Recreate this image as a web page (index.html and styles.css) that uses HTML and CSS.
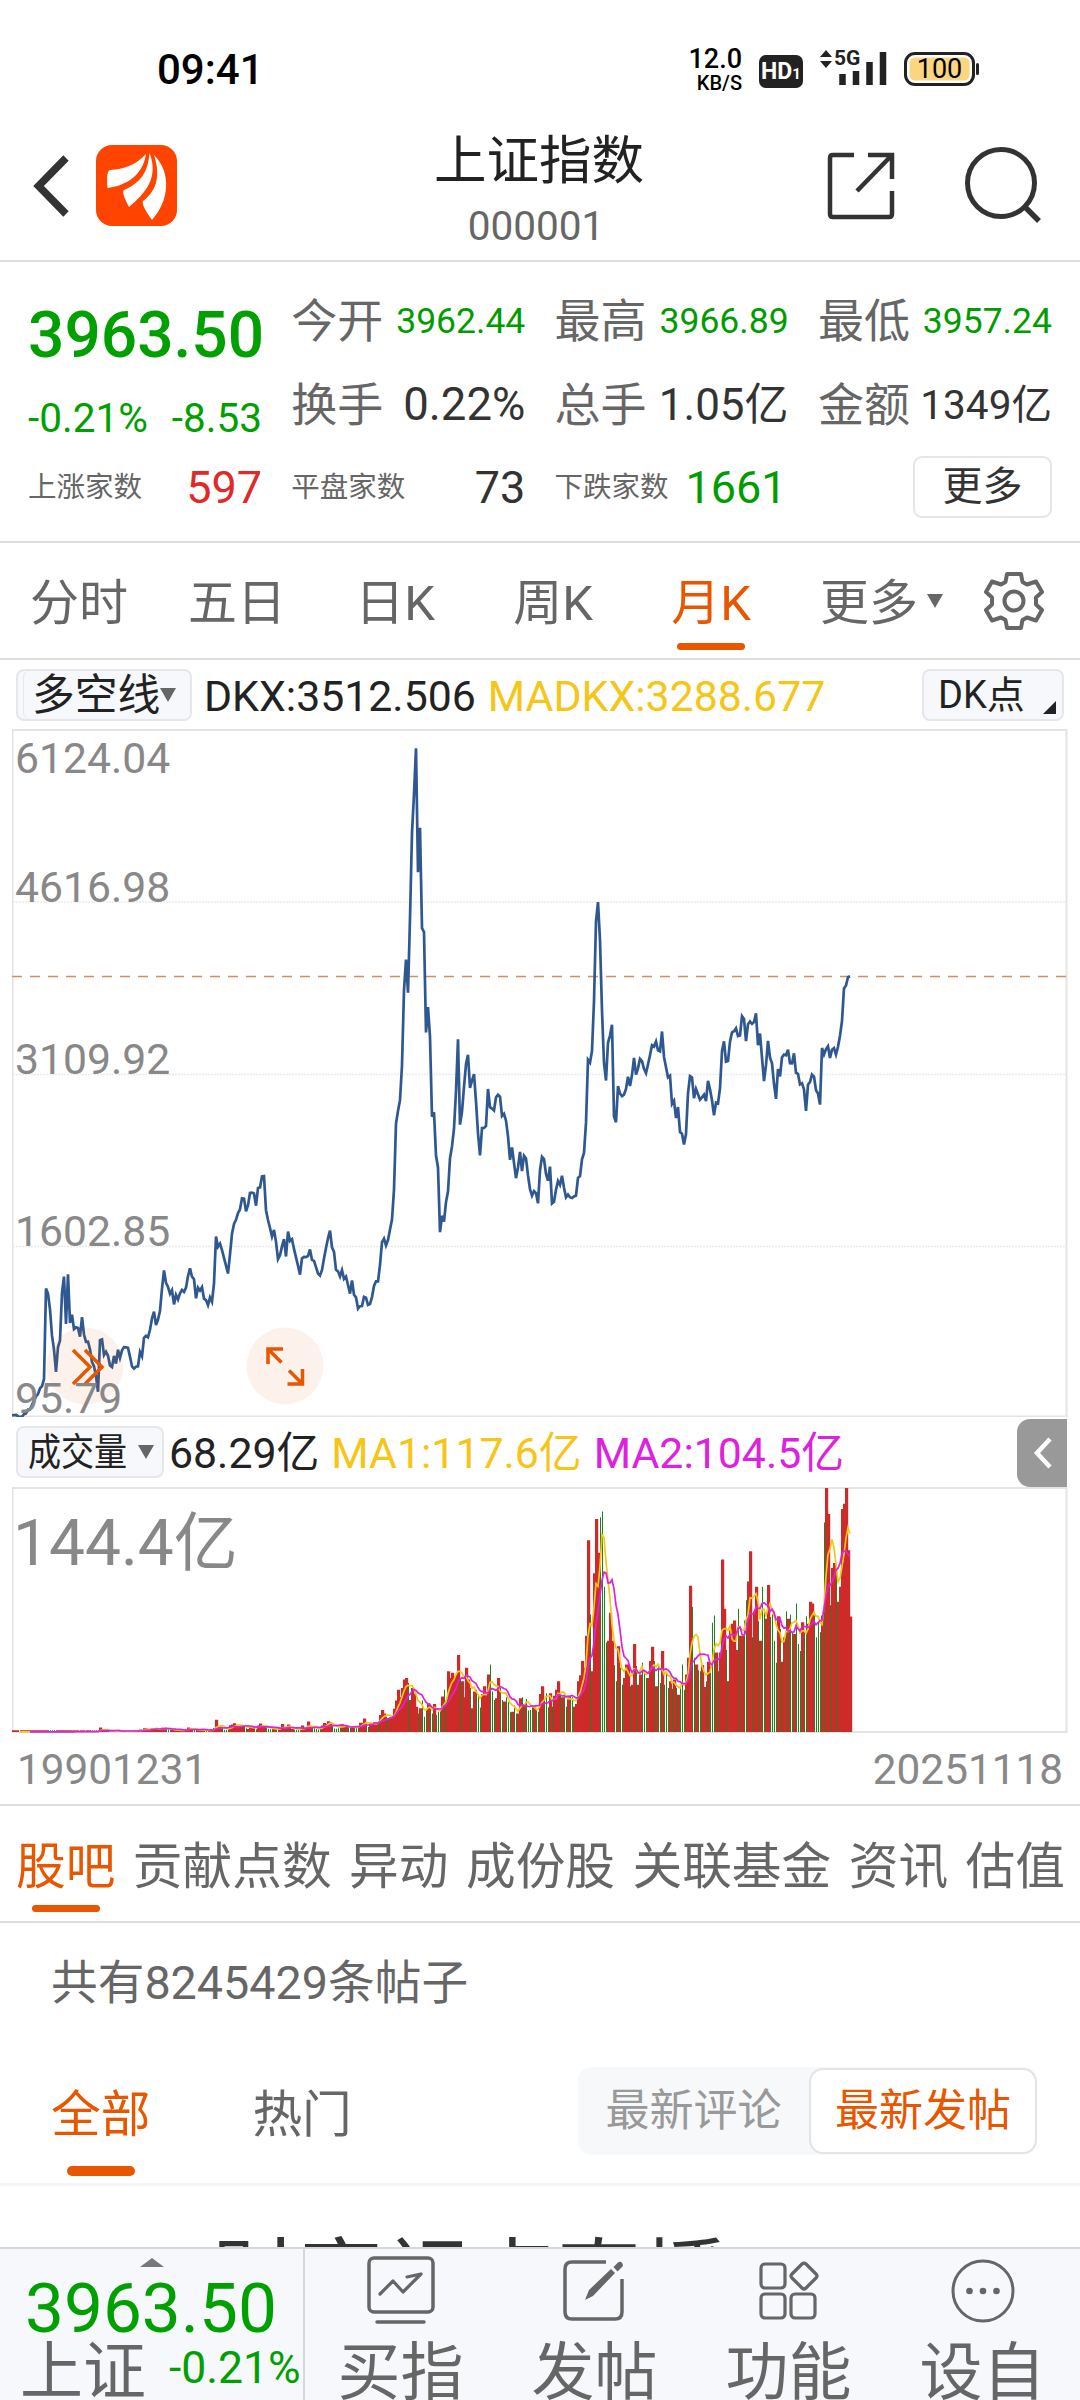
FILE: index.html
```html
<!DOCTYPE html>
<html lang="zh-CN">

<head>
    <meta charset="UTF-8">
    <meta name="viewport" content="width=device-width, initial-scale=1.0">
    <title>上证指数</title>
    <link rel="stylesheet" href="styles.css">
</head>

<body>
    <div class="status-bar">
        <span class="time">09:41</span>
        <div class="speed">
            <span class="speed-value">12.0</span>
            <span class="speed-unit">KB/S</span>
        </div>
        <span class="hd">HD<small>1</small></span>
        <svg class="signal" width="68" height="40" viewBox="0 0 68 40">
            <path d="M0 8l6-7 6 7zM0 12h12l-6 7z" fill="#222" />
            <text x="14" y="16" class="signal-text">5G</text>
            <path d="M22.500 36v-11M36 36v-14M49.500 36v-23M63 36v-33" stroke="#222" stroke-width="6.500" stroke-linecap="butt" />
        </svg>
        <div class="battery">100</div>
    </div>

    <header class="header">
        <svg class="back" width="36" height="62" viewBox="0 0 36 62">
            <path d="M33 3L5.500 31L33 59" fill="none" stroke="#333" stroke-width="7.500" />
        </svg>
        <svg class="logo" width="81" height="81" viewBox="0 0 81 81">
            <rect width="81" height="81" rx="16" fill="#ff4400" />
            <path d="M50 9C40 20 28 24 14 25Q10 26 11.500 43C34 40 47 28 50 9z" fill="#fff" />
            <path d="M53.500 8C52 28 44 38 28 45Q25 47 33 62C50 48 63 32 53.500 8z" fill="#fff" />
            <path d="M58 10C66 34 58 48 47 56Q45 60 56 75C73 56 76 28 58 10z" fill="#fff" />
        </svg>
        <div class="title">
            <h1>上证指数</h1>
            <p>000001</p>
        </div>
        <svg class="share" width="68" height="68" viewBox="0 0 68 68">
            <path d="M27 3H6Q3 3 3 6v56q0 3 3 3h56q3 0 3-3V39M41 3h24v24M64 4L30 39" fill="none" stroke="#333" stroke-width="4.500" />
        </svg>
        <svg class="search" width="78" height="78" viewBox="0 0 78 78">
            <circle cx="37" cy="37" r="33.500" fill="none" stroke="#333" stroke-width="5" />
            <path d="M61 61l14 14" stroke="#333" stroke-width="5.500" />
        </svg>
    </header>

    <section class="quote">
        <div class="cell price">3963.50</div>
        <div class="cell"><label>今开</label><b class="green s35">3962.44</b></div>
        <div class="cell"><label>最高</label><b class="green s35">3966.89</b></div>
        <div class="cell"><label>最低</label><b class="green s35">3957.24</b></div>
        <div class="cell change"><span>-0.21%</span><span>-8.53</span></div>
        <div class="cell"><label>换手</label><b class="s45">0.22%</b></div>
        <div class="cell"><label>总手</label><b class="s43">1.05亿</b></div>
        <div class="cell"><label>金额</label><b class="s40">1349亿</b></div>
        <div class="cell small"><label>上涨家数</label><b class="red s44">597</b></div>
        <div class="cell small"><label>平盘家数</label><b class="s44">73</b></div>
        <div class="cell small"><label>下跌家数</label><b class="green s44 falling">1661</b></div>
        <div class="cell"><button class="more">更多</button></div>
    </section>

    <nav class="periods">
        <span>分时</span>
        <span>五日</span>
        <span>日K</span>
        <span>周K</span>
        <span class="active">月K</span>
        <span>更多<i class="arrow"></i></span>
        <svg width="62" height="62" viewBox="-31 -31 62 62">
            <path d="M-7-27H7L8.500-19L13-16.500L22-19.500L28-9L22-3.500V3.500L28 9L22 19.500L13 16.500L8.500 19L7 27H-7L-8.500 19L-13 16.500L-22 19.500L-28 9L-22 3.500V-3.500L-28-9L-22-19.500L-13-16.500L-8.500-19z" fill="none" stroke="#666" stroke-width="4" stroke-linejoin="round" />
            <circle r="9.500" fill="none" stroke="#666" stroke-width="4" />
        </svg>
    </nav>

    <div class="indicator">
        <div class="select dkx">多空线<i class="arrow"></i></div>
        <span class="value">DKX:3512.506</span>
        <span class="value yellow">MADKX:3288.677</span>
        <div class="select dk">DK点<i class="corner"></i></div>
    </div>

    <svg class="price-chart" width="1056" height="688" viewBox="12 729 1056 688">
        <path class="grid" d="M13 902H1067M13 1074.500H1067M13 1246.500H1067" />
        <rect class="frame" x="12.500" y="730" width="1054" height="686.500" />
        <path class="current" d="M12 976.500H1067" />
        <path class="line" id="priceLine" />
        <circle class="round" cx="85" cy="1366" r="38.500" />
        <circle class="round" cx="285" cy="1366" r="38.500" />
        <path class="tool" d="M73 1350l17 17-17 17M85 1350l17 17-17 17" />
        <path class="tool" d="M268 1364v-15h15M268.500 1349.500l13 13M302.500 1369v15h-15M302 1383.500l-13-13" />
        <text class="scale" x="15" y="773">6124.04</text>
        <text class="scale" x="15" y="902">4616.98</text>
        <text class="scale" x="15" y="1073.500">3109.92</text>
        <text class="scale" x="15" y="1245.500">1602.85</text>
        <text class="scale" x="15" y="1413">95.79</text>
    </svg>

    <div class="indicator volume">
        <div class="select vol"><span>成交量</span><i class="arrow"></i></div>
        <span class="value">68.29亿</span>
        <span class="value yellow">MA1:117.6亿</span>
        <span class="value pink">MA2:104.5亿</span>
        <div class="handle">
            <svg width="20" height="34" viewBox="0 0 20 34">
                <path d="M18 3L5 17l13 14" fill="none" stroke="#fff" stroke-width="4.500" />
            </svg>
        </div>
    </div>

    <svg class="volume-chart" width="1056" height="246" viewBox="12 1487 1056 246">
        <rect class="frame" x="12.500" y="1488" width="1054" height="244" />
        <path class="up" id="upBars" />
        <path class="down" id="downBars" />
        <path class="ma1" id="ma1" />
        <path class="ma2" id="ma2" />
        <text class="scale big" x="13" y="1565">144.4亿</text>
    </svg>

    <div class="dates">
        <span>19901231</span>
        <span>20251118</span>
    </div>

    <nav class="sections">
        <span class="active">股吧</span>
        <span>贡献点数</span>
        <span>异动</span>
        <span>成份股</span>
        <span>关联基金</span>
        <span>资讯</span>
        <span>估值</span>
    </nav>

    <p class="count">共有8245429条帖子</p>

    <div class="filters">
        <span class="active">全部</span>
        <span>热门</span>
        <div class="sort">
            <button>最新评论</button>
            <button class="selected">最新发帖</button>
        </div>
    </div>

    <div class="post">财富视点直播</div>

    <footer class="toolbar">
        <div class="index">
            <i class="arrow-up"></i>
            <div class="index-price">3963.50</div>
            <div class="index-row"><span>上证</span><b>-0.21%</b></div>
        </div>
        <div class="item">
            <svg width="70" height="70" viewBox="0 0 70 70">
                <rect x="3" y="3" width="64" height="54" rx="5" fill="none" stroke="#666" stroke-width="3.500" />
                <path d="M14 39l13-13 10 11 18-18M41 22l14-3" fill="none" stroke="#666" stroke-width="3.200" stroke-linecap="round" stroke-linejoin="round" />
                <path d="M11 67h47" stroke="#666" stroke-width="3.500" stroke-linecap="round" />
            </svg>
            <span>买指</span>
        </div>
        <div class="item">
            <svg width="70" height="70" viewBox="0 0 70 70">
                <path d="M46 7H12q-7 0-7 7v43q0 7 7 7h43q7 0 7-7V24" fill="none" stroke="#666" stroke-width="3.500" />
                <path d="M25 45l4-10L51 14l4 4-22 23zM53.500 12l5-5q4-1 4.500 4l-5.500 5.500z" fill="#666" />
            </svg>
            <span>发帖</span>
        </div>
        <div class="item">
            <svg width="70" height="70" viewBox="0 0 70 70">
                <g fill="none" stroke="#666" stroke-width="3.200">
                    <rect x="7" y="9" width="24" height="24" rx="4" />
                    <rect x="7" y="39" width="24" height="24" rx="4" />
                    <rect x="37" y="39" width="24" height="24" rx="4" />
                    <path d="M48 9q2-2 4 0l10 10q2 2 0 4L52 33q-2 2-4 0L38 23q-2-2 0-4z" />
                </g>
            </svg>
            <span>功能</span>
        </div>
        <div class="item">
            <svg width="70" height="70" viewBox="0 0 70 70">
                <circle cx="35" cy="36" r="30" fill="none" stroke="#666" stroke-width="3" />
                <g fill="#666">
                    <circle cx="21.500" cy="36" r="3.300" />
                    <circle cx="35" cy="36" r="3.300" />
                    <circle cx="48.500" cy="36" r="3.300" />
                </g>
            </svg>
            <span>设自</span>
        </div>
    </footer>

    <script src="script.js"></script>
</body>

</html>
```

FILE: styles.css
```css
* {
    box-sizing: border-box;
}

body {
    margin: 0;
    width: 1080px;
    height: 2400px;
    display: flex;
    flex-direction: column;
    overflow: hidden;
    background: #fff;
    color: #222;
    font-family: Roboto, "Noto Sans CJK SC", sans-serif;
}

body > * {
    flex-shrink: 0;
}

h1,
p {
    margin: 0;
    font-weight: 400;
}

b {
    font-weight: 400;
}

button {
    font-family: inherit;
    padding: 0;
    border: none;
    background: none;
}

svg {
    display: block;
}

/* status bar */
.status-bar {
    height: 124px;
    padding: 14px 105px 0 157px;
    display: flex;
    align-items: center;
    color: #000;
}

.time {
    font-size: 42px;
    font-weight: 500;
    margin-right: auto;
}

.speed {
    display: flex;
    flex-direction: column;
    align-items: flex-end;
    margin-right: 17px;
    font-weight: 500;
}

.speed-value {
    font-size: 27px;
    line-height: 27px;
}

.speed-unit {
    font-size: 20px;
    line-height: 20px;
}

.hd {
    width: 44px;
    height: 33px;
    margin: 5px 17px 0 0;
    border-radius: 7px;
    background: #222;
    color: #fff;
    font-size: 23px;
    font-weight: 700;
    line-height: 34px;
    text-align: center;
}

.hd small {
    font-size: 15px;
}

.signal {
    margin-right: 16px;
}

.signal-text {
    font-size: 21px;
    font-weight: 700;
    fill: #222;
}

.battery {
    position: relative;
    width: 71px;
    height: 34px;
    border: 3px solid #222;
    border-radius: 11px;
    background: #fcd581;
    box-shadow: inset 0 0 0 2.500px #fff;
    font-size: 27px;
    line-height: 28px;
    text-align: center;
}

.battery::after {
    content: "";
    position: absolute;
    right: -7px;
    top: 8px;
    width: 3px;
    height: 12px;
    border-radius: 2px;
    background: #222;
}

/* header */
.header {
    height: 138px;
    padding: 0 38px 0 33px;
    display: flex;
    border-bottom: 2px solid #ddd;
}

.back {
    margin-top: 31px;
}

.logo {
    margin: 21px 0 0 27px;
}

.title {
    margin-left: 257px;
    width: 210px;
    padding-top: 2px;
    text-align: center;
}

.title h1 {
    font-size: 52.500px;
    line-height: 70px;
    white-space: nowrap;
}

.title p {
    font-size: 40.500px;
    line-height: 60px;
    color: #666;
    position: relative;
    left: -3px;
}

.share {
    margin: 28px 0 0 183px;
}

.search {
    margin: 22px 0 0 auto;
}

/* quote */
.quote {
    height: 281px;
    padding: 17px 28px 0;
    display: grid;
    grid-template-columns: repeat(4, 234px);
    grid-template-rows: 84px 84px 82px;
    column-gap: 29.300px;
    border-bottom: 2px solid #ddd;
}

.cell {
    display: flex;
    align-items: center;
    justify-content: space-between;
    white-space: nowrap;
    line-height: 60px;
    color: #333;
}

.cell label {
    font-size: 46px;
    color: #666;
}

.cell.small label {
    font-size: 28.500px;
}

.cell .green {
    color: #009c00;
}

.cell .red {
    color: #e02a2a;
}

.price {
    font-size: 64px;
    font-weight: 500;
    padding-top: 29px;
    color: #00a000;
}

.change {
    font-size: 40.500px;
    padding-top: 26px;
    color: #00a000;
}

.s35 {
    font-size: 35.500px;
}

.s40 {
    font-size: 40.500px;
}

.s43 {
    font-size: 44px;
}

.s44 {
    font-size: 45px;
}

.s45 {
    font-size: 45.500px;
}

.falling {
    margin-right: 2px;
}

.more {
    width: 139px;
    height: 62px;
    margin: -2px 0 0 auto;
    border: 2px solid #e6e6e6;
    border-radius: 9px;
    font-size: 40px;
    line-height: 58px;
    color: #333;
}

/* period tabs */
.periods {
    height: 117px;
    display: grid;
    grid-template-columns: repeat(6, 158px) 1fr;
    grid-template-rows: 115px;
    border-bottom: 2px solid #ddd;
    font-size: 49px;
    line-height: 121px;
    text-align: center;
    color: #666;
}

.periods span {
    position: relative;
    height: 115px;
    white-space: nowrap;
}

.periods svg {
    margin: 27px 0 0 35px;
}

.periods .arrow {
    position: absolute;
    left: 137px;
    top: 51px;
}

.periods .active::after,
.sections .active::after,
.filters .active::after {
    content: "";
    position: absolute;
    left: 50%;
    bottom: 8px;
    width: 68px;
    height: 7px;
    margin-left: -34px;
    border-radius: 4px;
    background: #e85600;
}

.active {
    color: #e85600;
}

.arrow {
    border: 8.500px solid transparent;
    border-top: 14px solid #666;
    border-bottom: 0;
}

/* indicator rows */
.indicator {
    height: 69px;
    padding: 0 16px;
    display: flex;
    align-items: center;
    white-space: nowrap;
    font-size: 42.800px;
}

.select {
    height: 52px;
    display: flex;
    align-items: center;
    border: 2px solid #e6e7ea;
    border-radius: 8px;
    background: #f6f8fb;
    line-height: 50px;
}

.dkx {
    width: 176px;
    padding-left: 14px;
    margin-right: 12px;
    box-shadow: inset 5px 0 0 #f6f8fb, inset 6px 0 0 #e6e7ea;
}

.dk {
    position: relative;
    width: 142px;
    margin-left: auto;
    padding-left: 14px;
    font-size: 38px;
}

.corner {
    position: absolute;
    right: 6px;
    bottom: 5px;
    border-left: 13px solid transparent;
    border-bottom: 13px solid #222;
}

.value {
    margin-right: 12px;
    padding-top: 2px;
    line-height: 48px;
}

.yellow {
    color: #f5c518;
}

.pink {
    color: #dd22dd;
}

.volume {
    height: 70px;
    padding-right: 13px;
}

.vol {
    width: 148px;
    padding-left: 10px;
    margin-right: 5px;
}

.vol span {
    width: 110px;
    font-size: 38px;
    transform: scaleX(0.87);
    transform-origin: left;
}

.handle {
    width: 50px;
    height: 68px;
    margin: 2px 0 0 auto;
    display: flex;
    align-items: center;
    justify-content: center;
    border-radius: 13px 0 0 13px;
    background: #999;
}

/* charts */
.price-chart,
.volume-chart {
    margin-left: 12px;
}

.frame {
    fill: none;
    stroke: #e4e4e4;
    stroke-width: 2;
}

.grid {
    stroke: #ebebeb;
    stroke-width: 1.500;
    stroke-dasharray: 2 1;
}

.current {
    stroke: #dc8a5c;
    stroke-width: 1.500;
    stroke-dasharray: 10 8;
}

.line {
    fill: none;
    stroke: #2f5891;
    stroke-width: 2.700;
    stroke-linejoin: miter;
}

.round {
    fill: #e85600;
    fill-opacity: 0.08;
}

.tool {
    fill: none;
    stroke: #e85600;
    stroke-width: 3.500;
}

.scale {
    font-size: 42.700px;
    fill: #888;
}

.big {
    font-size: 64px;
}

.up {
    fill: #cf2a2a;
}

.down {
    fill: #1b851b;
}

.ma1,
.ma2 {
    fill: none;
    stroke: #f5c518;
    stroke-width: 1.700;
}

.ma2 {
    stroke: #dd22dd;
}

.dates {
    height: 71px;
    padding: 0 17px;
    display: flex;
    justify-content: space-between;
    font-size: 42.300px;
    line-height: 73px;
    color: #888;
}

/* section tabs */
.sections {
    height: 119px;
    padding: 0 15px 0 16px;
    display: flex;
    justify-content: space-between;
    border-top: 2px solid #ddd;
    border-bottom: 2px solid #ddd;
    font-size: 49.700px;
    line-height: 122px;
    white-space: nowrap;
    color: #666;
}

.sections span {
    position: relative;
}

.sections .active::after {
    bottom: 9px;
}

.count {
    height: 119px;
    padding-left: 51px;
    font-size: 46.700px;
    line-height: 121px;
    color: #666;
}

.filters {
    height: 144px;
    padding: 0 43px 0 51px;
    display: flex;
    border-bottom: 3px solid #f5f6f7;
    font-size: 49.700px;
    line-height: 146px;
    color: #666;
}

.filters > span {
    position: relative;
    margin-right: 102px;
}

.filters .active::after {
    bottom: 7px;
    height: 10px;
    border-radius: 5px;
}

.sort {
    width: 459px;
    height: 88px;
    margin: 25px 0 0 auto;
    display: flex;
    align-items: center;
    border-radius: 14px;
    background: #f7f8fa;
}

.sort button {
    width: 231px;
    height: 86px;
    font-size: 44px;
    line-height: 80px;
    color: #999;
}

.sort .selected {
    width: 228px;
    border: 2px solid #e4e4e4;
    border-radius: 14px;
    background: #fff;
    color: #e85600;
}

.post {
    height: 61px;
    padding: 45px 0 0 212px;
    overflow: hidden;
    font-size: 86px;
    line-height: 100px;
    color: #333;
}

/* bottom toolbar */
.toolbar {
    height: 153px;
    display: grid;
    grid-template-columns: 305px repeat(4, 194px);
    overflow: hidden;
    border-top: 2px solid #d5d7da;
    background: #f6f8fb;
    color: #666;
    white-space: nowrap;
}

.index {
    border-right: 2px solid #d5d7da;
}

.arrow-up {
    display: block;
    width: 0;
    margin: 9px 0 0 140px;
    border: 12px solid transparent;
    border-bottom: 9px solid #77777c;
    border-top: 0;
}

.index-price {
    padding-left: 25px;
    margin-top: 4px;
    font-size: 69.300px;
    line-height: 76px;
    color: #00a000;
}

.index-row {
    display: flex;
    padding-left: 20px;
    margin-top: -15px;
    font-size: 63px;
    line-height: 80px;
}

.index-row b {
    margin: -4px 0 0 23px;
    font-size: 44.500px;
    color: #00a000;
}

.item {
    padding-top: 6px;
    display: flex;
    flex-direction: column;
    align-items: center;
    font-size: 63px;
    line-height: 90px;
}

.item svg {
    margin-left: -2px;
}

.item span {
    margin: 3px 0 0 -3px;
}
```

FILE: script.js
```js
// monthly close of the index, 1990-12 .. 2025-11
const closes = [
    127.61,
    129.97, 133.01, 120.19, 113.94, 114.83, 137.56, 143.80, 178.43, 180.92, 218.60, 259.60, 292.75,
    313.24, 364.66, 381.24, 445.38, 1234.71, 1191.19, 1052.07, 823.27, 702.32, 507.25, 724.60, 780.39,
    1198.48, 1339.88, 925.91, 1358.78, 935.48, 1007.05, 881.07, 895.68, 890.27, 814.82, 984.93, 833.80,
    770.25, 770.98, 704.46, 592.56, 556.26, 469.29, 333.92, 785.33, 791.15, 654.98, 683.59, 647.87,
    562.59, 549.26, 646.92, 579.93, 700.51, 630.58, 695.55, 723.87, 722.43, 717.32, 641.14, 555.29,
    537.35, 552.94, 556.39, 681.16, 643.65, 804.25, 822.48, 809.94, 875.53, 976.71, 1032.94, 917.02,
    964.74, 1040.27, 1234.62, 1393.75, 1285.18, 1250.27, 1189.76, 1221.06, 1097.38, 1180.39, 1139.63, 1194.10,
    1222.91, 1206.53, 1243.01, 1343.44, 1411.21, 1339.20, 1316.91, 1150.22, 1242.89, 1217.31, 1247.42, 1146.70,
    1134.67, 1090.08, 1158.05, 1120.93, 1279.32, 1689.43, 1601.45, 1627.12, 1570.70, 1504.56, 1434.97, 1366.58,
    1535.00, 1714.58, 1800.22, 1836.32, 1894.55, 1928.11, 2023.53, 2021.20, 1910.16, 1961.29, 2070.61, 2073.48,
    2065.61, 1959.18, 2112.78, 2119.18, 2214.26, 2218.03, 1920.32, 1834.14, 1764.87, 1689.17, 1747.99, 1645.97,
    1491.67, 1524.70, 1603.91, 1667.75, 1515.73, 1732.76, 1651.59, 1666.62, 1581.62, 1507.50, 1434.18, 1357.65,
    1499.81, 1511.93, 1510.58, 1521.44, 1576.26, 1486.02, 1476.74, 1421.98, 1367.16, 1348.30, 1397.23, 1497.04,
    1590.73, 1675.07, 1741.62, 1595.59, 1555.91, 1399.16, 1386.20, 1342.06, 1396.70, 1320.54, 1340.77, 1266.50,
    1191.82, 1306.00, 1181.24, 1159.15, 1060.74, 1080.94, 1083.03, 1162.80, 1155.61, 1092.82, 1099.26, 1161.06,
    1258.05, 1299.03, 1298.30, 1440.22, 1641.30, 1672.21, 1612.73, 1658.64, 1752.42, 1837.99, 2099.29, 2675.47,
    2786.33, 2881.07, 3183.98, 3841.27, 4109.65, 3820.70, 4471.03, 5218.82, 5552.30, 5954.77, 4871.78, 5261.56,
    4383.39, 4348.54, 3472.71, 3693.11, 3433.35, 2736.10, 2775.72, 2397.37, 2293.78, 1728.79, 1871.16, 1820.81,
    1990.66, 2082.85, 2373.21, 2477.57, 2632.93, 2959.36, 3412.06, 2667.75, 2779.43, 2995.85, 3195.30, 3277.14,
    2989.29, 3051.94, 3109.11, 2870.61, 2592.15, 2398.37, 2637.50, 2638.80, 2655.66, 2978.84, 2820.18, 2808.08,
    2790.69, 2905.05, 2928.11, 2911.51, 2743.47, 2762.08, 2701.73, 2567.34, 2359.22, 2468.25, 2333.41, 2199.42,
    2292.61, 2428.49, 2262.79, 2396.32, 2372.23, 2225.43, 2103.64, 2047.52, 2086.17, 2068.88, 1980.12, 2269.13,
    2385.42, 2365.59, 2236.62, 2177.91, 2300.60, 1979.21, 1993.80, 2098.38, 2174.67, 2141.61, 2220.50, 2115.98,
    2033.08, 2056.30, 2033.31, 2026.36, 2039.21, 2048.33, 2201.56, 2217.20, 2363.87, 2420.18, 2682.84, 3234.68,
    3210.36, 3310.30, 3747.90, 4441.66, 4611.74, 4277.22, 3663.73, 3205.99, 3052.78, 3382.56, 3445.41, 3539.18,
    2737.60, 2687.98, 3003.92, 2938.32, 2916.62, 2929.61, 2979.34, 3085.49, 3004.70, 3100.49, 3250.03, 3103.64,
    3159.17, 3241.73, 3222.51, 3154.66, 3117.18, 3192.43, 3273.03, 3360.81, 3348.94, 3393.34, 3317.19, 3307.17,
    3480.83, 3259.41, 3168.90, 3082.23, 3095.47, 2847.42, 2876.40, 2725.25, 2821.35, 2602.78, 2588.19, 2493.90,
    2584.57, 2940.95, 3090.76, 3078.34, 2898.70, 2978.88, 2932.51, 2886.24, 2905.19, 2929.06, 2871.98, 3050.12,
    2976.53, 2880.30, 2750.30, 2860.08, 2852.35, 2984.67, 3310.01, 3395.68, 3218.05, 3224.53, 3391.76, 3473.07,
    3483.07, 3509.08, 3441.91, 3446.86, 3615.48, 3591.20, 3397.36, 3543.94, 3568.17, 3547.34, 3563.89, 3639.78,
    3361.44, 3462.31, 3252.20, 3047.06, 3186.43, 3398.62, 3253.24, 3202.14, 3024.39, 2893.48, 3151.34, 3089.26,
    3255.67, 3279.61, 3272.86, 3323.27, 3204.56, 3202.06, 3291.04, 3119.88, 3110.48, 3018.77, 3029.67, 2974.93,
    2788.55, 3015.17, 3041.17, 3104.82, 3086.81, 2967.40, 2938.75, 2842.21, 3336.50, 3279.82, 3326.46, 3351.76,
    3250.60, 3320.90, 3335.75, 3279.03, 3347.49, 3444.43, 3573.21, 3857.93, 3882.78, 3954.79, 3963.50
];

// monthly volume
const volumes = [
    0.1,
    0.1, 0.1, 0.1, 0.1, 0.1, 0.1, 0.1, 0.1, 0.1, 0.1, 0.1, 0.1,
    0.1, 0.1, 0.1, 0.1, 0.1, 0.1, 0.1, 0.1, 0.1, 0.1, 0.1, 0.1,
    0.1, 0.1, 0.1, 0.2, 0.2, 0.2, 0.2, 0.3, 0.2, 0.2, 0.4, 0.3,
    0.2, 0.2, 0.2, 0.3, 0.2, 0.2, 0.3, 2.7, 1.8, 1.3, 0.6, 0.4,
    0.3, 0.3, 0.6, 0.4, 1.2, 0.5, 0.6, 0.8, 0.7, 0.5, 0.4, 0.3,
    0.3, 0.4, 0.7, 1.5, 1, 2.2, 2, 1.4, 1.6, 2.4, 2, 2.5,
    1.2, 1.3, 2.5, 2.5, 2.6, 1.5, 1.3, 1.2, 1, 1.2, 0.8, 1,
    1, 0.8, 1.6, 2.7, 2.1, 2, 1.2, 1.4, 1, 1.2, 1.3, 0.8,
    0.7, 0.5, 1.6, 1.3, 2.4, 7.2, 3.4, 3.3, 2.6, 1.3, 1.3, 1.5,
    4, 4.5, 5.2, 4, 3.3, 3.7, 3.5, 3.8, 2.2, 1.8, 3.4, 2.4,
    2.8, 1.7, 3.8, 5, 3.8, 3.7, 2.5, 1.9, 1.6, 1.9, 2, 1.7,
    2.1, 1.7, 4.7, 3, 2, 4.5, 2.7, 1.8, 1.3, 1.3, 1.5, 1.3,
    3.8, 2.1, 2.5, 6.2, 3.5, 2.5, 2.2, 1.8, 1.5, 2, 3.9, 5.3,
    4.8, 6.4, 5.6, 4, 2, 1.9, 2.2, 4, 4.6, 3, 3.5, 2.5,
    2.5, 3.5, 3, 2.5, 2.5, 5.5, 5.5, 8, 5.5, 3, 4.5, 4.5,
    5.7, 5.7, 6, 10, 13, 11, 9, 8, 8.6, 8.6, 13.7, 18.6,
    25, 20.5, 26, 31, 32, 29, 19, 26, 22.5, 15, 11, 14,
    18.6, 9, 12.7, 17, 16, 11, 16.5, 10, 12, 13, 21, 25,
    18.6, 36, 32, 35, 33, 34, 45.6, 32, 30, 20.5, 38, 31,
    26, 14, 24, 25, 22.5, 14.5, 22.5, 27, 23.5, 34, 40, 24,
    19, 20, 32, 26, 19, 18, 20.5, 17.6, 11.7, 12, 16, 11,
    11, 20, 20.5, 16.6, 19.5, 12.7, 13, 14.6, 14.6, 12.7, 12, 22.5,
    27, 19.5, 23, 14.6, 23, 15, 21.5, 25, 30, 21.5, 20.5, 20.5,
    15, 20.5, 21.5, 20.5, 15, 16.6, 30, 33.6, 42, 38, 57, 113.5,
    69.5, 36, 94, 126, 106, 127, 130.5, 86, 53, 54, 70.5, 54,
    39.5, 30, 50.7, 38, 28, 32, 40, 40, 27, 28, 52, 39,
    28, 34, 41, 35, 32, 32, 42, 50.5, 42, 27, 39, 29,
    48, 28, 35, 26, 30, 25.6, 31, 26, 22, 26, 40, 25,
    34, 44, 86.5, 74, 44, 40, 36.6, 36, 39.5, 26.6, 30, 41.5,
    39, 64.6, 69, 47, 36, 47, 102, 73, 48.5, 30, 60, 64,
    66, 48.5, 73, 57, 57, 66, 78, 89, 107, 56, 71.5, 86,
    65.6, 54, 86, 72, 67, 87, 68, 69.5, 54, 41, 68.5, 61,
    41.5, 56, 71.5, 67, 69.5, 59, 58, 76, 52, 48, 65, 59,
    68.5, 64, 77, 76, 69, 56, 65, 59, 69, 124, 144.4, 129,
    75, 97, 100, 95, 77, 86, 132, 135, 144.4, 107.6, 68.3
];

const x = (i) => 12 + i * 2;
const priceY = (v) => 1246.5 - (v - 1602.85) * 0.11447;
const volumeY = (v) => 1732 - v * 1.69;

const linePath = (values, y) => values
    .map((v, i) => v === null ? '' : `L${x(i)} ${y(v).toFixed(1)}`)
    .join('')
    .replace('L', 'M');

const average = (values, n) => values.map((v, i) => {
    if (i < n - 1) return null;
    return values.slice(i - n + 1, i + 1).reduce((a, b) => a + b, 0) / n;
});

document.getElementById('priceLine').setAttribute('d', linePath(closes, priceY));

let up = '';
let down = '';
volumes.forEach((v, i) => {
    const top = Math.min(volumeY(v), 1730.3);
    if (i === 0 || closes[i] >= closes[i - 1]) {
        up += `M${x(i) - 1} 1732V${top}h3.2V1732z`;
    } else {
        down += `M${x(i)} 1732V${top}h1V1732z`;
    }
});
document.getElementById('upBars').setAttribute('d', up);
document.getElementById('downBars').setAttribute('d', down);
document.getElementById('ma1').setAttribute('d', linePath(average(volumes, 5), volumeY));
document.getElementById('ma2').setAttribute('d', linePath(average(volumes, 10), volumeY));
```
